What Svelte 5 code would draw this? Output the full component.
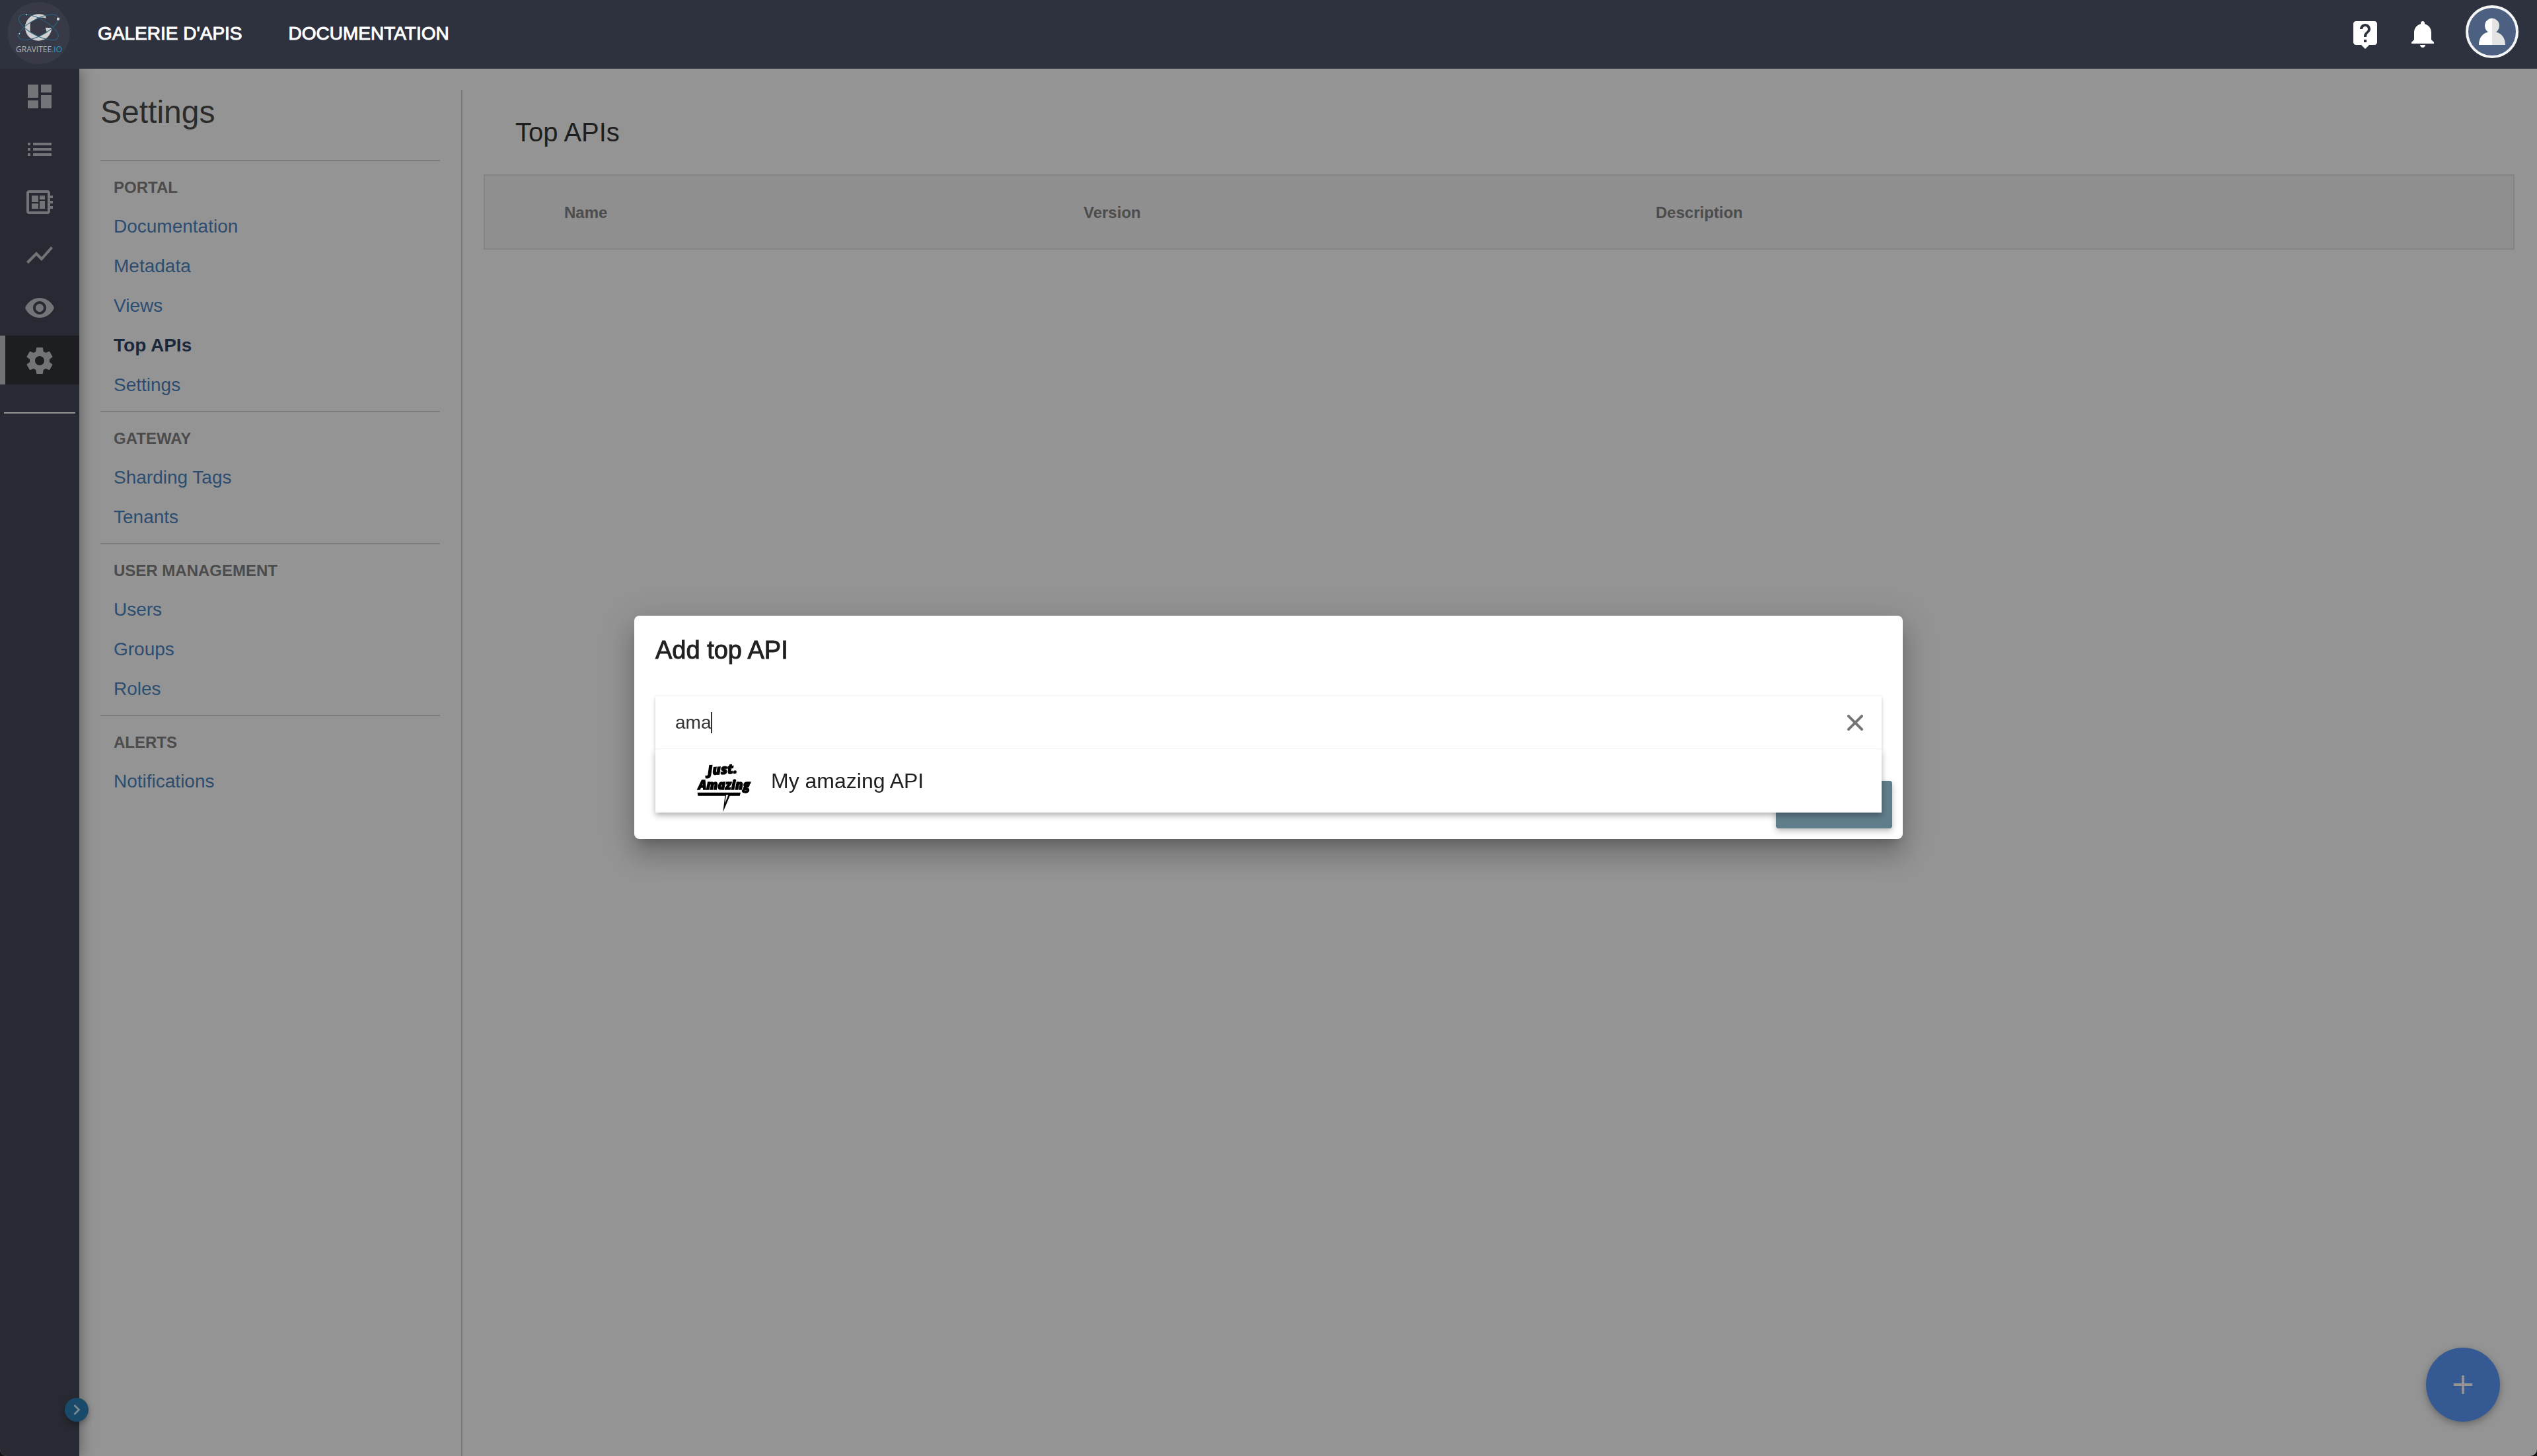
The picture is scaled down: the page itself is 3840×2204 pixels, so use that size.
<script>
  const topLinks = ["GALERIE D'APIS", 'DOCUMENTATION'];

  const rail = [
    { label: 'Dashboard', path: 'M3 13h8V3H3v10zm0 8h8v-6H3v6zm10 0h8V11h-8v10zm0-18v6h8V3h-8z' },
    { label: 'APIs', path: 'M3 13h2v-2H3v2zm0 4h2v-2H3v2zm0-8h2V7H3v2zm4 4h14v-2H7v2zm0 4h14v-2H7v2zM7 7v2h14V7H7z' },
    {
      label: 'Applications',
      path: 'M22 9V7h-2V5c0-1.1-.9-2-2-2H4c-1.1 0-2 .9-2 2v14c0 1.1.9 2 2 2h14c1.1 0 2-.9 2-2v-2h2v-2h-2v-2h2v-2h-2V9h2zm-4 10H4V5h14v14zM6 13h5v4H6v-4zm6-6h4v3h-4V7zM6 7h5v5H6V7zm6 4h4v6h-4v-6z'
    },
    { label: 'Analytics', path: 'M3.5 18.49l6-6.01 4 4L22 6.92l-1.41-1.41-7.09 7.97-4-4L2 16.99l1.5 1.5z' },
    {
      label: 'Audit',
      path: 'M12 4.5C7 4.5 2.73 7.61 1 12c1.73 4.39 6 7.5 11 7.5s9.27-3.11 11-7.5c-1.73-4.39-6-7.5-11-7.5zM12 17c-2.76 0-5-2.24-5-5s2.24-5 5-5 5 2.24 5 5-2.24 5-5 5zm0-8c-1.66 0-3 1.34-3 3s1.34 3 3 3 3-1.34 3-3-1.34-3-3-3z'
    },
    {
      label: 'Settings',
      active: true,
      path: 'M19.43 12.98c.04-.32.07-.64.07-.98s-.03-.66-.07-.98l2.11-1.65c.19-.15.24-.42.12-.64l-2-3.46c-.12-.22-.39-.3-.61-.22l-2.49 1c-.52-.4-1.08-.73-1.69-.98l-.38-2.65C14.46 2.18 14.25 2 14 2h-4c-.25 0-.46.18-.49.42l-.38 2.65c-.61.25-1.17.59-1.69.98l-2.49-1c-.23-.09-.49 0-.61.22l-2 3.46c-.13.22-.07.49.12.64l2.11 1.65c-.04.32-.07.65-.07.98s.03.66.07.98l-2.11 1.65c-.19.15-.24.42-.12.64l2 3.46c.12.22.39.3.61.22l2.49-1c.52.4 1.08.73 1.69.98l.38 2.65c.03.24.24.42.49.42h4c.25 0 .46-.18.49-.42l.38-2.65c.61-.25 1.17-.59 1.69-.98l2.49 1c.23.09.49 0 .61-.22l2-3.46c.12-.22.07-.49-.12-.64l-2.11-1.65zM12 15.5c-1.93 0-3.5-1.57-3.5-3.5s1.57-3.5 3.5-3.5 3.5 1.57 3.5 3.5-1.57 3.5-3.5 3.5z'
    }
  ];

  const groups = [
    { title: 'PORTAL', links: ['Documentation', 'Metadata', 'Views', 'Top APIs', 'Settings'] },
    { title: 'GATEWAY', links: ['Sharding Tags', 'Tenants'] },
    { title: 'USER MANAGEMENT', links: ['Users', 'Groups', 'Roles'] },
    { title: 'ALERTS', links: ['Notifications'] }
  ];
  const current = 'Top APIs';

  let query = $state('ama');
</script>

<div class="app">
  <header class="topbar">
    <a class="brand" href="#home" aria-label="Home">
      <svg viewBox="0 0 120 104" aria-hidden="true">
        <circle cx="58.5" cy="50" r="47" fill="#383b47" />
        <g transform="scale(.3333)">
          <path
            fill="#cfcfcf"
            d="M209 83L206 70Q190 63 174 64A60 60.500 0 0 0 174 185A60 60 0 0 0 235 127L206 125L213 147L176 167L137 145L137 103L172 82Q190 76 209 83Z"
          />
          <g fill="none" stroke="#2b6482" stroke-width="3">
            <ellipse cx="175" cy="124" rx="100" ry="38" transform="rotate(28 175 124)" />
            <ellipse cx="175" cy="124" rx="100" ry="38" transform="rotate(-28 175 124)" />
          </g>
          <g fill="#d4d4d4">
            <circle cx="264" cy="86" r="6.500" />
            <circle cx="120" cy="67" r="3" />
            <circle cx="88" cy="153" r="3" />
          </g>
        </g>
        <text x="24" y="79">GRAVITEE<tspan>.IO</tspan></text>
      </svg>
    </a>
    <nav class="topnav" aria-label="Main">
      {#each topLinks as link}
        <a href="#{link}">{link}</a>
      {/each}
    </nav>
    <div class="tools">
      <button class="tool" aria-label="Help">
        <svg viewBox="0 0 24 24">
          <path
            d="M19 2H5c-1.11 0-2 .9-2 2v14c0 1.1.89 2 2 2h4l3 3 3-3h4c1.1 0 2-.9 2-2V4c0-1.1-.9-2-2-2zm-6 16h-2v-2h2v2zm2.070-7.750l-.9.92C13.450 11.900 13 12.500 13 14h-2v-.5c0-1.100.45-2.100 1.170-2.830l1.240-1.260c.37-.36.59-.86.59-1.410 0-1.100-.9-2-2-2s-2 .9-2 2H8c0-2.210 1.790-4 4-4s4 1.790 4 4c0 .88-.36 1.680-.93 2.250z"
          />
        </svg>
      </button>
      <button class="tool" aria-label="Notifications">
        <svg viewBox="0 0 24 24">
          <path
            d="M11.500 22c1.100 0 2-.9 2-2h-4c0 1.100.9 2 2 2zm6.500-6v-5.500c0-3.070-2.130-5.640-5-6.320V3.500c0-.83-.67-1.500-1.500-1.500S10 2.670 10 3.500v.68c-2.870.68-5 3.250-5 6.320V16l-2 2v1h17v-1l-2-2z"
          />
        </svg>
      </button>
      <button class="avatar" aria-label="Account">
        <svg viewBox="0 0 80 80">
          <circle cx="40" cy="40" r="38" fill="#4c6081" stroke="#f5f5f5" stroke-width="4" />
          <path fill="#fff" d="M40 19.500a11.500 11.500 0 0 0-6 21C25 42.500 20 50 20 60h20z" />
          <path fill="#e4e4e4" d="M40 19.500a11.500 11.500 0 0 1 6 21C55 42.500 60 50 60 60H40z" />
        </svg>
      </button>
    </div>
  </header>

  <div class="body">
    <nav class="rail" aria-label="Sections">
      {#each rail as item}
        <a href="#{item.label}" class:active={item.active} aria-label={item.label}>
          <svg viewBox="0 0 24 24"><path d={item.path} /></svg>
        </a>
      {/each}
      <hr />
      <button class="expand" aria-label="Expand menu">
        <svg viewBox="0 0 24 24"><path d="M10 6L8.590 7.410 13.170 12l-4.580 4.590L10 18l6-6z" /></svg>
      </button>
    </nav>

    <aside class="settings">
      <h1>Settings</h1>
      {#each groups as group}
        <section>
          <h2>{group.title}</h2>
          {#each group.links as link}
            <a href="#{link}" class:current={link === current}>{link}</a>
          {/each}
        </section>
      {/each}
    </aside>

    <main>
      <h2>Top APIs</h2>
      <table>
        <thead>
          <tr><th class="name">Name</th><th class="version">Version</th><th>Description</th></tr>
        </thead>
      </table>
    </main>
  </div>

  <button class="fab" aria-label="Add">
    <svg viewBox="0 0 24 24"><path d="M19 13h-6v6h-2v-6H5v-2h6V5h2v6h6v2z" /></svg>
  </button>

  <div class="overlay">
    <div class="dialog" role="dialog" aria-modal="true" aria-labelledby="dialog-title">
      <h2 id="dialog-title">Add top API</h2>
      <div class="search">
        <div class="field">
          <input type="text" aria-label="Search an API" bind:value={query} />
          <span class="caret"></span>
          <button class="clear" aria-label="Clear" onclick={() => (query = '')}>
            <svg viewBox="0 0 24 24"><path d="M2 2l20 20M22 2L2 22" /></svg>
          </button>
        </div>
        <ul class="results">
          <li>
            <svg class="picture" viewBox="45 42 240 240" aria-hidden="true">
              <g class="lettering">
                <text x="94" y="112" font-size="60" transform="rotate(-4 94 112)">Just.</text>
                <text x="50" y="176" font-size="56">Amazing</text>
              </g>
              <path d="M47 191H243L239 206H194L163 280L172 206H49Z" />
              <path fill="#fff" d="M177 202H187L172 240Z" />
            </svg>
            <span>My amazing API</span>
          </li>
        </ul>
      </div>
      <div class="actions"><button class="submit" aria-label="Add API"></button></div>
    </div>
  </div>
</div>

<style>
  :global(body) {
    background: #111214;
  }
  .app,
  .app :global(*) {
    box-sizing: border-box;
  }
  .app {
    display: flex;
    flex-direction: column;
    min-height: 100vh;
    overflow: hidden;
    border-radius: 0 0 10px 10px;
    background: #949494;
    color: #212121;
    font-family: 'Liberation Sans', Arial, sans-serif;
    font-size: 28px;
  }
  a {
    text-decoration: none;
  }
  h1,
  h2,
  ul {
    margin: 0;
    padding: 0;
    font-weight: 400;
  }
  button {
    display: block;
    padding: 0;
    border: 0;
    background: none;
  }
  svg {
    display: block;
  }

  .topbar {
    position: relative;
    z-index: 2;
    display: flex;
    height: 104px;
    background: #2e313e;
  }
  .brand {
    width: 120px;
    margin-right: 28px;
  }
  .brand text {
    fill: #b4b6ba;
    font-family: 'Open Sans', sans-serif;
    font-size: 12px;
  }
  .brand tspan {
    fill: #2b9ccc;
  }
  .topnav {
    display: flex;
    gap: 70px;
    line-height: 102px;
  }
  .topnav a {
    color: #fff;
    -webkit-text-stroke: 1px #fff;
  }
  .tools {
    display: flex;
    align-items: center;
    gap: 40px;
    margin-left: auto;
    padding-right: 28px;
  }
  .tool svg {
    width: 48px;
    height: 48px;
    fill: #fff;
  }
  .avatar {
    align-self: flex-start;
    width: 80px;
    margin-top: 8px;
  }

  .body {
    display: flex;
    flex: 1;
  }
  .rail {
    position: relative;
    z-index: 1;
    flex: none;
    width: 120px;
    padding-top: 4px;
    background: #272a32;
    box-shadow: 4px 0 18px rgba(0, 0, 0, 0.3);
  }
  .rail a {
    display: block;
    height: 74px;
    margin-bottom: 6px;
    padding: 14px 36px 12px;
  }
  .rail a.active {
    background: #1d1e22;
    box-shadow: inset 8px 0 #707274;
  }
  .rail a svg {
    width: 48px;
    height: 48px;
    fill: #727477;
  }
  .rail hr {
    height: 2px;
    margin: 42px 6px 0;
    border: 0;
    background: #949494;
  }
  .expand {
    position: absolute;
    right: -14px;
    bottom: 52px;
    display: grid;
    place-items: center;
    width: 36px;
    height: 36px;
    border-radius: 50%;
    background: #1a4a69;
    box-shadow: 0 4px 10px rgba(0, 0, 0, 0.3);
  }
  .expand svg {
    width: 32px;
    height: 32px;
    fill: #7c8a93;
  }

  .settings {
    flex: none;
    width: 580px;
    margin-top: 32px;
    padding: 0 32px;
    border-right: 2px solid #7d7d7d;
  }
  .settings h1 {
    margin-bottom: 38px;
    color: #2b2b2b;
    font-size: 48px;
    line-height: 68px;
  }
  .settings section {
    padding: 20px 20px 0;
    border-top: 2px solid #7d7d7d;
  }
  .settings h2 {
    padding-bottom: 18px;
    color: #4c4c4c;
    font-size: 24px;
    font-weight: 700;
    line-height: 40px;
  }
  .settings section a {
    display: block;
    padding-bottom: 18px;
    color: #2d4d70;
    line-height: 42px;
  }
  .settings a.current {
    color: #1b283c;
    font-weight: 700;
  }

  main {
    flex: 1;
    padding: 64px 34px 0 32px;
  }
  main h2 {
    padding: 0 48px 32px;
    color: #1f1f1f;
    font-size: 40px;
    line-height: 64px;
  }
  table {
    width: 100%;
    border: 2px solid #848484;
    border-spacing: 0;
    background: #8f8f8f;
    table-layout: fixed;
  }
  th {
    height: 110px;
    padding: 2px 0 0;
    color: #4c4c4c;
    font-size: 24px;
    text-align: left;
  }
  .name {
    width: 906px;
    padding-left: 120px;
  }
  .version {
    width: 866px;
  }

  .fab {
    position: fixed;
    right: 56px;
    bottom: 52px;
    display: grid;
    place-items: center;
    width: 112px;
    height: 112px;
    border-radius: 50%;
    background: #355a93;
    box-shadow: 0 4px 12px rgba(0, 0, 0, 0.3);
  }
  .fab svg {
    width: 48px;
    height: 48px;
    fill: #949494;
  }

  .overlay {
    position: fixed;
    inset: 0;
    z-index: 3;
    display: flex;
    align-items: center;
    justify-content: center;
    padding-bottom: 2px;
  }
  .dialog {
    width: 50%;
    padding: 22px 16px 16px 32px;
    border-radius: 8px;
    background: #fff;
    box-shadow:
      0 14px 16px -8px rgba(0, 0, 0, 0.2),
      0 26px 38px 4px rgba(0, 0, 0, 0.14),
      0 10px 48px 8px rgba(0, 0, 0, 0.12);
  }
  .dialog h2 {
    margin-bottom: 40px;
    font-size: 38px;
    line-height: 60px;
    -webkit-text-stroke: 1px #212121;
  }
  .search {
    position: relative;
    margin-right: 16px;
    margin-bottom: 48px;
  }
  .field {
    position: relative;
    display: flex;
    align-items: center;
    height: 80px;
    padding: 0 28px 0 30px;
    background: #fff;
    box-shadow: 0 2px 5px rgba(0, 0, 0, 0.25);
  }
  .field input {
    flex: 1;
    height: 40px;
    padding: 0;
    border: 0;
    outline: 0;
    background: none;
    color: #333;
    font: inherit;
  }
  .caret {
    position: absolute;
    top: 24px;
    left: 84px;
    width: 2px;
    height: 32px;
    background: #333;
  }
  .clear svg {
    width: 24px;
    height: 24px;
    fill: none;
    stroke: #757575;
    stroke-linecap: round;
    stroke-width: 4;
  }
  .results {
    position: absolute;
    inset: 100% 0 auto;
    background: #fff;
    box-shadow: 0 4px 9px rgba(0, 0, 0, 0.32);
    clip-path: inset(-1px -12px -16px);
    list-style: none;
  }
  .results li {
    display: flex;
    align-items: center;
    gap: 32px;
    height: 96px;
    padding-left: 63px;
    font-size: 32px;
  }
  .picture {
    align-self: flex-end;
    width: 80px;
    height: 80px;
    overflow: visible;
  }
  .lettering {
    fill: #000;
    stroke: #000;
    stroke-width: 4;
    font-family: 'Open Sans', sans-serif;
    font-style: italic;
    font-weight: 800;
  }
  .actions {
    display: flex;
    justify-content: flex-end;
  }
  .submit {
    width: 176px;
    height: 72px;
    border-radius: 4px;
    background: #607d8b;
    box-shadow: 0 4px 10px rgba(0, 0, 0, 0.26);
  }
</style>
